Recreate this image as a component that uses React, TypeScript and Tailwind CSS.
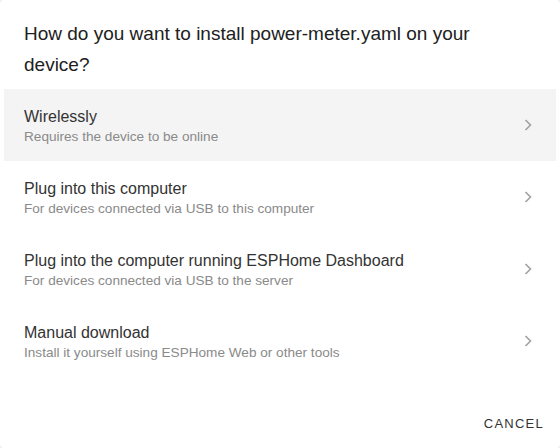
const options = [
  { title: 'Wirelessly', sub: 'Requires the device to be online' },
  { title: 'Plug into this computer', sub: 'For devices connected via USB to this computer' },
  { title: 'Plug into the computer running ESPHome Dashboard', sub: 'For devices connected via USB to the server' },
  { title: 'Manual download', sub: 'Install it yourself using ESPHome Web or other tools' },
];

function Chevron() {
  return (
    <svg width="24" height="24" viewBox="0 0 24 24" className="shrink-0">
      <polyline points="9.5,7 14.5,12 9.5,17" fill="none" stroke="#a0a0a0" strokeWidth="1.6" />
    </svg>
  );
}

export default function App() {
  return (
    <div className="w-[560px] h-[448px] bg-[#eeeeee]" style={{ fontFamily: '"Liberation Sans", Arial, sans-serif' }}>
      <div className="w-full h-full bg-white rounded-[4px] flex flex-col">
        {/* Title */}
        <h2 className="px-6 pt-[18px] pb-[9px] text-[19px] leading-[31px] text-[#212121] font-normal">
          How do you want to install power-meter.yaml on your device?
        </h2>

        {/* Options */}
        <div className="px-1 flex flex-col">
          {options.map((o, i) => (
            <div
              key={o.title}
              className={`h-[72px] flex items-center pl-5 pr-4 ${i === 0 ? 'bg-[#f4f4f4]' : ''}`}
            >
              <div className="flex-1 flex flex-col pt-1">
                <span className="text-[16px] leading-[20px] text-[#333333]">{o.title}</span>
                <span className="text-[13.6px] leading-[20px] text-[#8a8a8a]">{o.sub}</span>
              </div>
              <Chevron />
            </div>
          ))}
        </div>

        {/* Actions */}
        <div className="mt-auto flex justify-end pr-2 pb-[6px]">
          <button className="px-2 h-9 text-[13px] tracking-[1.25px] text-[#333333] uppercase">
            Cancel
          </button>
        </div>
      </div>
    </div>
  );
}
